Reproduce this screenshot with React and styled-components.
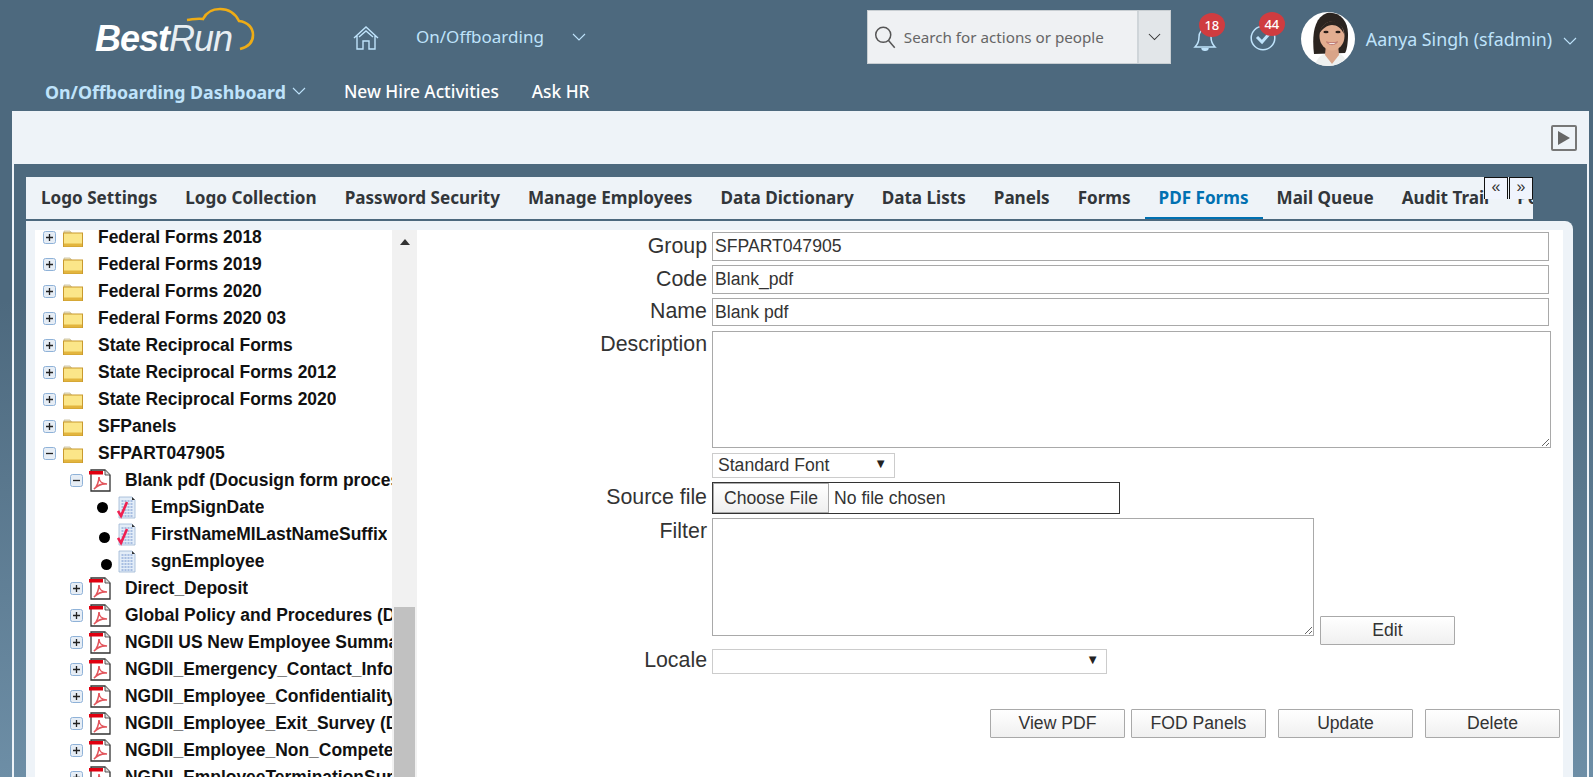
import React from "react";
import styled, { createGlobalStyle } from "styled-components";

const GlobalStyle = createGlobalStyle`
  html, body {
    margin: 0;
    padding: 0;
    height: 100%;
    overflow: hidden;
  }
  body {
    font-family: "Liberation Sans", Arial, sans-serif;
    background: linear-gradient(#4d697e 0, #4d697e 300px, #6d8ea6 777px);
  }
`;

const Shell = styled.div`
  height: 100vh;
  overflow: hidden;
  display: flex;
  flex-direction: column;
`;

const Header = styled.header`
  height: 111px;
  flex: none;
  font-family: "Noto Sans", "Open Sans", sans-serif;
`;

const TopRow = styled.div`
  display: flex;
  align-items: flex-start;
  height: 73px;
`;

const LogoLink = styled.a`
  position: relative;
  width: 160px;
  height: 60px;
  margin-left: 95px;
  flex: none;
  display: block;
`;

const LogoCloud = styled.svg`
  position: absolute;
  left: 0;
  top: 0;
`;

const LogoText = styled.span`
  position: absolute;
  left: 0;
  top: 19px;
  font-family: "Liberation Sans", Arial, sans-serif;
  font-style: italic;
  font-size: 36px;
  line-height: 40px;
  letter-spacing: -1px;
  color: #fff;
  b {
    font-weight: 700;
  }
  span {
    font-weight: 400;
    color: #e8eef2;
  }
`;

const HomeButton = styled.a`
  margin: 26px 0 0 98px;
  width: 26px;
  height: 24px;
  flex: none;
  display: block;
`;

const ModuleTitle = styled.span`
  margin: 23px 0 0 37px;
  font-size: 17px;
  line-height: 28px;
  color: #bfe3fb;
  white-space: nowrap;
`;

const Chevron = styled.svg`
  flex: none;
  margin: ${(p) => p.$margin || "0"};
`;

const SearchBox = styled.div`
  display: flex;
  width: 304px;
  height: 54px;
  margin: 10px 0 0 281px;
  box-sizing: border-box;
  border: 1px solid #c8ced2;
  background: #eff1f3;
  flex: none;
`;

const SearchField = styled.div`
  flex: 1;
  display: flex;
  align-items: center;
  gap: 8px;
  padding-left: 6px;
  font-size: 15.2px;
  color: #666;
  white-space: nowrap;
`;

const SearchMenu = styled.div`
  width: 33px;
  display: flex;
  align-items: center;
  justify-content: center;
  background: #e2e6e9;
  border-left: 2px solid #cfd5d9;
  box-sizing: border-box;
`;

const NoticeIcon = styled.div`
  position: relative;
  flex: none;
  width: 26px;
  height: 26px;
  margin: ${(p) => p.$margin};
`;

const Badge = styled.span`
  position: absolute;
  left: ${(p) => p.$left}px;
  top: ${(p) => p.$top}px;
  min-width: 24px;
  height: 24px;
  padding: 0 1px;
  border-radius: 50%;
  background: #cf3c40;
  color: #fff;
  font-size: 13px;
  font-weight: 500;
  line-height: 24px;
  text-align: center;
`;

const Avatar = styled.svg`
  flex: none;
  margin: 12px 0 0 25px;
`;

const UserName = styled.span`
  margin: 24px 0 0 11px;
  font-size: 17.8px;
  line-height: 30px;
  color: #bfe3fb;
  white-space: nowrap;
`;

const NavRow = styled.nav`
  display: flex;
  align-items: center;
  height: 37px;
  padding-left: 45px;
`;

const NavItem = styled.a`
  font-size: ${(p) => (p.$current ? 17.75 : 17.3)}px;
  line-height: 30px;
  white-space: nowrap;
  margin-right: ${(p) => p.$gap || 0}px;
  color: ${(p) => (p.$current ? "#bfe3fb" : "#fff")};
  font-weight: ${(p) => (p.$current ? 700 : 500)};
`;

const Page = styled.main`
  flex: 1;
  min-height: 0;
  width: 1577px;
  margin-left: 12px;
  box-sizing: border-box;
  border: solid #eef3f8;
  border-width: 0 2px;
  display: flex;
  flex-direction: column;
`;

const ToolStrip = styled.div`
  height: 53px;
  flex: none;
  background: #eef3f8;
  display: flex;
  align-items: center;
  justify-content: flex-end;
  padding-right: 10px;
`;

const PlayButton = styled.button`
  width: 26px;
  height: 26px;
  padding: 0;
  border: 2px solid #777;
  border-radius: 2px;
  background: transparent;
  display: flex;
  align-items: center;
  justify-content: center;
`;

const Workspace = styled.div`
  flex: 1;
  min-height: 0;
  padding: 13px 14px 0 12px;
  display: flex;
  flex-direction: column;
`;

const TabBar = styled.div`
  position: relative;
  width: 1507px;
  height: 43px;
  flex: none;
  box-sizing: border-box;
  background: #eef3f8;
  border-bottom: 1px solid #4d697e;
`;

const TabList = styled.div`
  display: flex;
  height: 100%;
  padding-left: 1px;
  overflow: hidden;
`;

const Tab = styled.a`
  flex: none;
  height: 100%;
  box-sizing: border-box;
  padding: 0 14px;
  font-family: "Noto Sans", "Open Sans", sans-serif;
  font-size: 17.1px;
  font-weight: 700;
  line-height: 41px;
  white-space: nowrap;
  color: ${(p) => (p.$active ? "#0070b1" : "#32363a")};
  border-bottom: 2px solid ${(p) => (p.$active ? "#0070b1" : "transparent")};
`;

const ScrollTab = styled.button`
  position: absolute;
  top: 0;
  left: ${(p) => p.$left}px;
  width: 24px;
  height: 22px;
  padding: 0 0 4px;
  box-sizing: border-box;
  border: solid #111;
  border-width: 1px 1px 0 1px;
  background: #f0f4fd;
  font-family: "Liberation Sans", Arial, sans-serif;
  font-size: 16px;
  line-height: 16px;
  color: #333;
`;

const Panel = styled.section`
  flex: 1;
  min-height: 0;
  margin-top: 1px;
  padding: 9px 10px 0 9px;
  background: #eef3f8;
  border-radius: 0 8px 0 0;
  display: flex;
`;

const TreePane = styled.div`
  width: 357px;
  flex: none;
  background: #fff;
  overflow: hidden;
`;

const TreeRow = styled.div`
  display: flex;
  align-items: center;
  height: 27px;
  white-space: nowrap;
  font-size: 17.45px;
  font-weight: 700;
  color: #111;
  &:first-child {
    margin-top: -6px;
  }
`;

const Expander = styled.svg`
  flex: none;
  margin-left: ${(p) => p.$indent}px;
`;

const RowIcon = styled.svg`
  flex: none;
  margin: ${(p) => p.$margin};
`;

const Bullet = styled.span`
  flex: none;
  width: 11px;
  height: 11px;
  border-radius: 50%;
  background: #000;
  margin-left: ${(p) => p.$left}px;
  margin-right: ${(p) => 71 - p.$left}px;
  transform: translateY(${(p) => p.$drop}px);
`;

const RowLabel = styled.span`
  overflow: hidden;
`;

const ScrollTrack = styled.div`
  position: relative;
  width: 25px;
  flex: none;
  background: #f1f1f1;
`;

const ScrollArrow = styled.span`
  position: absolute;
  left: 8px;
  top: 9px;
  width: 0;
  height: 0;
  border: 5px solid transparent;
  border-top: 0;
  border-bottom: 6px solid #333;
`;

const ScrollThumb = styled.span`
  position: absolute;
  left: 2px;
  right: 2px;
  top: 377px;
  bottom: 0;
  background: #c1c1c1;
`;

const FormPane = styled.form`
  flex: 1;
  background: #fff;
  padding-top: 2px;
  display: flex;
  flex-direction: column;
  gap: 4px;
`;

const FormRow = styled.div`
  display: flex;
  align-items: ${(p) => p.$align || "center"};
  gap: 5px;
  margin-top: ${(p) => p.$top || 0}px;
`;

const FieldLabel = styled.label`
  width: 290px;
  flex: none;
  text-align: right;
  font-size: 21.33px;
  line-height: 24px;
  color: #333;
  align-self: ${(p) => (p.$top ? "flex-start" : "center")};
  margin: ${(p) => (p.$top ? "1px 0 0" : "0 0 2px")};
`;

const fieldFont = `
  font-family: "Liberation Sans", Arial, sans-serif;
  font-size: 17.6px;
  color: #333;
`;

const TextField = styled.input`
  ${fieldFont}
  width: 837px;
  height: ${(p) => p.$height || 29}px;
  box-sizing: border-box;
  padding: 0 2px;
  border: 1px solid #a9a9a9;
  outline: none;
`;

const TextArea = styled.textarea`
  ${fieldFont}
  display: block;
  width: ${(p) => p.$width}px;
  height: ${(p) => p.$height}px;
  box-sizing: border-box;
  padding: 2px;
  border: 1px solid #a9a9a9;
  outline: none;
`;

const SelectWrap = styled.div`
  position: relative;
  width: ${(p) => p.$width}px;
  height: 25px;
  &::after {
    content: "▼";
    position: absolute;
    right: 8px;
    top: 3px;
    font-size: 13px;
    line-height: 16px;
    color: #222;
    pointer-events: none;
  }
`;

const SelectField = styled.select`
  ${fieldFont}
  width: 100%;
  height: 100%;
  padding: 0 5px 2px;
  appearance: none;
  background: #fff;
  border: 1px solid #ccc;
  border-radius: 0;
  outline: none;
`;

const FileField = styled.div`
  ${fieldFont}
  width: 408px;
  height: 32px;
  box-sizing: border-box;
  border: 1px solid #333;
  display: flex;
  align-items: center;
  input {
    ${fieldFont}
    width: 100%;
    height: 100%;
    &::file-selector-button {
      ${fieldFont}
      height: 30px;
      width: 116px;
      margin-right: 5px;
      border: 1px solid #a9a9a9;
      background: linear-gradient(#fff, #efefef);
    }
  }
`;

const ActionButton = styled.button`
  ${fieldFont}
  width: 135px;
  height: 29px;
  flex: none;
  padding: 0;
  margin-left: ${(p) => p.$lead || 0}px;
  border: 1px solid #a9a9a9;
  border-radius: 1px;
  background: linear-gradient(#fff, #f0f0f0);
`;

const EditButton = styled(ActionButton)`
  margin-left: 1px;
  margin-bottom: -9px;
`;

const ActionBar = styled.div`
  display: flex;
  justify-content: flex-end;
  margin-top: 31px;
  padding-right: 3px;
`;

const Down = ({ size = 14, color = "#bfe3fb", margin }) => (
  <Chevron $margin={margin} width={size} height={size / 2 + 2} viewBox="0 0 14 9">
    <path d="M1 1l6 6 6-6" fill="none" stroke={color} strokeWidth="1.1" />
  </Chevron>
);

const PlusMinus = ({ open, indent }) => (
  <Expander $indent={indent} width="13" height="13" viewBox="0 0 13 13">
    <rect x="0.5" y="0.5" width="12" height="12" rx="2" fill="#e6edf5" stroke="#8fb2d8" />
    <path d={open ? "M3 6.5h7" : "M3 6.5h7M6.5 3v7"} stroke="#222" strokeWidth="1.3" />
  </Expander>
);

const FolderIcon = () => (
  <RowIcon $margin="0 15px 0 7px" width="20" height="18" viewBox="0 0 20 18">
    <path d="M1 2h6l1.5 2H1z" fill="#f3e9c0" stroke="#bdb28a" strokeWidth="0.7" />
    <rect x="0.5" y="4" width="19" height="13.5" fill="#fbe689" stroke="#c99a2e" />
    <rect x="1" y="14.5" width="18" height="3" fill="#e3b53e" />
  </RowIcon>
);

const PdfIcon = () => (
  <RowIcon $margin="0 14px 0 6px" width="22" height="23" viewBox="0 0 22 23">
    <path d="M2 1h14l5 5v16H2z" fill="#fff" stroke="#333" strokeWidth="1.3" />
    <path d="M16 1v5h5" fill="#ddd" stroke="#333" strokeWidth="0.8" />
    <rect x="0" y="2" width="14" height="3.5" fill="#e00010" />
    <path d="M5 20c3-2 5-8 5-12 0 4 3 7 8 7-5-.5-9 1-13 5z" fill="none" stroke="#e2565d" strokeWidth="1.6" />
  </RowIcon>
);

const FormIcon = ({ checked }) => (
  <RowIcon $margin="0 15px 0 0" width="19" height="23" viewBox="0 0 19 23">
    <path d="M2 1h13l3 3v18H2z" fill="#e3edf8" stroke="#9db5d3" strokeWidth="0.8" />
    <path d="M15 1l3 3h-3z" fill="#333" />
    <path d="M4.5 5h11M4.5 8h11M4.5 11h11M4.5 14h11M4.5 17h11M4.5 20h11" stroke="#6d8fcb" strokeWidth="1" strokeDasharray="2 1" />
    {checked && <path d="M1 15l3 5 6-14" fill="none" stroke="#f02050" strokeWidth="2.6" />}
  </RowIcon>
);

const folders = [
  "Federal Forms 2018",
  "Federal Forms 2019",
  "Federal Forms 2020",
  "Federal Forms 2020 03",
  "State Reciprocal Forms",
  "State Reciprocal Forms 2012",
  "State Reciprocal Forms 2020",
  "SFPanels",
];

const fields = [
  { name: "EmpSignDate", left: 62, drop: 0, checked: true },
  { name: "FirstNameMILastNameSuffix", left: 64, drop: 3, checked: true },
  { name: "sgnEmployee", left: 66, drop: 3, checked: false },
];

const pdfForms = [
  "Direct_Deposit",
  "Global Policy and Procedures (Docusign)",
  "NGDII US New Employee Summary",
  "NGDII_Emergency_Contact_Information",
  "NGDII_Employee_Confidentiality_Agreement",
  "NGDII_Employee_Exit_Survey (Docusign)",
  "NGDII_Employee_Non_Compete_Agreement",
  "NGDII_EmployeeTerminationSurvey",
];

const tabs = [
  "Logo Settings",
  "Logo Collection",
  "Password Security",
  "Manage Employees",
  "Data Dictionary",
  "Data Lists",
  "Panels",
  "Forms",
  "PDF Forms",
  "Mail Queue",
  "Audit Trail",
  "Permissions",
];

export default function App() {
  return (
    <Shell>
      <GlobalStyle />
      <Header>
        <TopRow>
          <LogoLink>
            <LogoCloud width="160" height="60" viewBox="0 0 160 60">
              <path
                d="M92 20c8-1 11-2 16-1 3-6 9-10 17-10 8 0 15 4 19 12 9 1 14 7 14 14 0 7-5 12-13 14"
                fill="none"
                stroke="#eeac16"
                strokeWidth="2.6"
              />
            </LogoCloud>
            <LogoText>
              <b>Best</b>
              <span>Run</span>
            </LogoText>
          </LogoLink>
          <HomeButton>
            <svg width="26" height="24" viewBox="0 0 26 24" fill="none" stroke="#bfe3fb" strokeWidth="1.4">
              <path d="M1 12L13 1l12 11M4 9.5V23h6v-8h6v8h6V9.5" />
              <path d="M6 11l7-6 7 6" />
            </svg>
          </HomeButton>
          <ModuleTitle>On/Offboarding</ModuleTitle>
          <Down margin="33px 0 0 28px" />
          <SearchBox>
            <SearchField>
              <svg width="22" height="23" viewBox="0 0 24 26" fill="none" stroke="#555" strokeWidth="1.7">
                <circle cx="10" cy="10" r="8.5" />
                <path d="M16 16.5l7 8" />
              </svg>
              Search for actions or people
            </SearchField>
            <SearchMenu>
              <Down size={13} color="#333" />
            </SearchMenu>
          </SearchBox>
          <NoticeIcon $margin="27px 0 0 22px">
            <svg width="24" height="26" viewBox="0 0 24 26" fill="none" stroke="#bfe3fb" strokeWidth="1.5">
              <path d="M2 20c3-3 4-5 4-10 0-5 3-8 6-8s6 3 6 8c0 5 1 7 4 10z" />
              <path d="M9 21c0 3 6 3 6 0" fill="#bfe3fb" />
            </svg>
            <Badge $left={6} $top={-14}>18</Badge>
          </NoticeIcon>
          <NoticeIcon $margin="25px 0 0 31px">
            <svg width="26" height="26" viewBox="0 0 26 26" fill="none" stroke="#bfe3fb">
              <circle cx="13" cy="13" r="11.8" strokeWidth="1.5" />
              <path d="M7 12l5 5 7-8" strokeWidth="3" />
            </svg>
            <Badge $left={9} $top={-13}>44</Badge>
          </NoticeIcon>
          <Avatar width="54" height="54" viewBox="0 0 54 54">
            <defs>
              <clipPath id="avatarClip">
                <circle cx="27" cy="27" r="27" />
              </clipPath>
            </defs>
            <g clipPath="url(#avatarClip)">
              <rect width="54" height="54" fill="#fff" />
              <path d="M13 42C11 25 12 6 26 1c12-2 21 7 21 21 0 8-1 16-3 19z" fill="#2b2420" />
              <path d="M14 54c1-7 5-10 9-12h16c4 2 6 5 7 12z" fill="#eef0ef" />
              <path d="M25 32h12l1 11-7 9-7-9z" fill="#d9a488" />
              <ellipse cx="31" cy="24" rx="12.5" ry="14.5" fill="#e2ad90" />
              <path d="M18 22c2-9 8-13 14-13 6 0 10 5 11 13-3-6-7-9-12-9-5 0-10 4-13 9z" fill="#2b2420" />
              <ellipse cx="25" cy="20" rx="2.6" ry="1.3" fill="#2a1d18" />
              <ellipse cx="37" cy="20" rx="2.6" ry="1.3" fill="#2a1d18" />
              <path d="M25.5 30c3 3.5 8 3.5 11 0-3 1-8 1-11 0z" fill="#fff" stroke="#a8504c" strokeWidth="0.7" />
            </g>
          </Avatar>
          <UserName>Aanya Singh (sfadmin)</UserName>
          <Down margin="37px 0 0 11px" />
        </TopRow>
        <NavRow>
          <NavItem $current>On/Offboarding Dashboard</NavItem>
          <Down margin="0 38px 0 6px" />
          <NavItem $gap={33}>New Hire Activities</NavItem>
          <NavItem>Ask HR</NavItem>
        </NavRow>
      </Header>
      <Page>
        <ToolStrip>
          <PlayButton aria-label="Run">
            <svg width="12" height="14" viewBox="0 0 12 14">
              <path d="M0 0l12 7-12 7z" fill="#666" />
            </svg>
          </PlayButton>
        </ToolStrip>
        <Workspace>
          <TabBar>
            <TabList>
              {tabs.map((t) => (
                <Tab key={t} $active={t === "PDF Forms"}>
                  {t}
                </Tab>
              ))}
            </TabList>
            <ScrollTab type="button" $left={1458}>«</ScrollTab>
            <ScrollTab type="button" $left={1483}>»</ScrollTab>
          </TabBar>
          <Panel>
            <TreePane>
              {folders.map((f) => (
                <TreeRow key={f}>
                  <PlusMinus indent={8} />
                  <FolderIcon />
                  <RowLabel>{f}</RowLabel>
                </TreeRow>
              ))}
              <TreeRow>
                <PlusMinus indent={8} open />
                <FolderIcon />
                <RowLabel>SFPART047905</RowLabel>
              </TreeRow>
              <TreeRow>
                <PlusMinus indent={35} open />
                <PdfIcon />
                <RowLabel>Blank pdf (Docusign form processing)</RowLabel>
              </TreeRow>
              {fields.map((f) => (
                <TreeRow key={f.name}>
                  <Bullet $left={f.left} $drop={f.drop} />
                  <FormIcon checked={f.checked} />
                  <RowLabel>{f.name}</RowLabel>
                </TreeRow>
              ))}
              {pdfForms.map((p) => (
                <TreeRow key={p}>
                  <PlusMinus indent={35} />
                  <PdfIcon />
                  <RowLabel>{p}</RowLabel>
                </TreeRow>
              ))}
            </TreePane>
            <ScrollTrack>
              <ScrollArrow />
              <ScrollThumb />
            </ScrollTrack>
            <FormPane onSubmit={(e) => e.preventDefault()}>
              <FormRow>
                <FieldLabel>Group</FieldLabel>
                <TextField defaultValue="SFPART047905" />
              </FormRow>
              <FormRow>
                <FieldLabel>Code</FieldLabel>
                <TextField defaultValue="Blank_pdf" />
              </FormRow>
              <FormRow>
                <FieldLabel>Name</FieldLabel>
                <TextField defaultValue="Blank pdf" $height={28} />
              </FormRow>
              <FormRow $top={1}>
                <FieldLabel $top>Description</FieldLabel>
                <TextArea $width={839} $height={117} />
              </FormRow>
              <FormRow $top={1}>
                <FieldLabel />
                <SelectWrap $width={183}>
                  <SelectField defaultValue="Standard Font">
                    <option>Standard Font</option>
                  </SelectField>
                </SelectWrap>
              </FormRow>
              <FormRow>
                <FieldLabel>Source file</FieldLabel>
                <FileField>
                  <input type="file" />
                </FileField>
              </FormRow>
              <FormRow $align="flex-end">
                <FieldLabel $top>Filter</FieldLabel>
                <TextArea $width={602} $height={118} />
                <EditButton type="button">Edit</EditButton>
              </FormRow>
              <FormRow $top={8}>
                <FieldLabel>Locale</FieldLabel>
                <SelectWrap $width={395}>
                  <SelectField />
                </SelectWrap>
              </FormRow>
              <ActionBar>
                <ActionButton type="button">View PDF</ActionButton>
                <ActionButton type="button" $lead={6}>FOD Panels</ActionButton>
                <ActionButton type="button" $lead={12}>Update</ActionButton>
                <ActionButton type="button" $lead={12}>Delete</ActionButton>
              </ActionBar>
            </FormPane>
          </Panel>
        </Workspace>
      </Page>
    </Shell>
  );
}
